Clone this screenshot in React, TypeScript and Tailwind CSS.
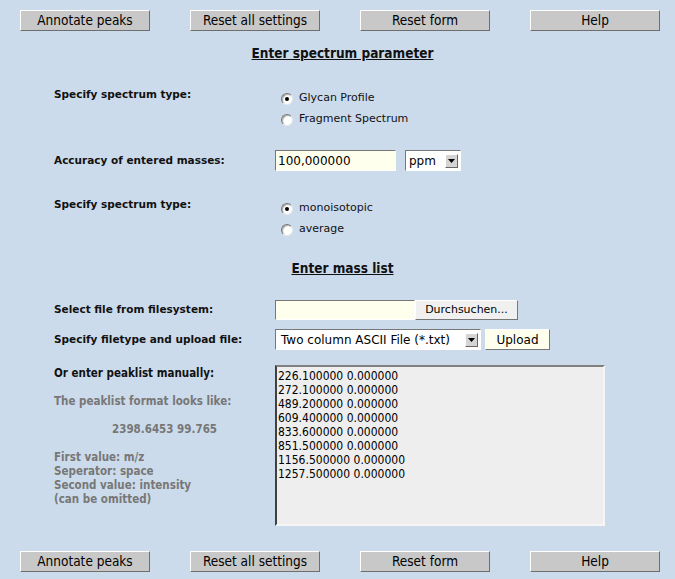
const peaks = [
  "226.100000 0.000000",
  "272.100000 0.000000",
  "489.200000 0.000000",
  "609.400000 0.000000",
  "833.600000 0.000000",
  "851.500000 0.000000",
  "1156.500000 0.000000",
  "1257.500000 0.000000",
]

const ButtonBar = () => (
  <div className="flex gap-[40px] pl-[20px] h-[21px]">
    {["Annotate peaks", "Reset all settings", "Reset form", "Help"].map((label) => (
      <div
        key={label}
        className="w-[130px] h-[21px] bg-[#c8c8c8] border border-t-white border-l-white border-b-[#6e6e6e] border-r-[#6e6e6e] flex items-center justify-center text-[13.5px] text-black font-['DejaVu_Sans_Condensed',sans-serif]"
      >
        {label}
      </div>
    ))}
  </div>
)

const Radio = ({ checked, label }: { checked?: boolean; label: string }) => (
  <div className="flex items-center h-[21px]">
    <span className="w-[12px] h-[12px] ml-[6px] rounded-full bg-white border border-t-[#777] border-l-[#777] border-b-[#e8e8e8] border-r-[#e8e8e8] shadow-[inset_1px_1px_1px_#aaa] flex items-center justify-center">
      {checked && <span className="w-[4px] h-[4px] rounded-full bg-black" />}
    </span>
    <span className="ml-[6px] text-[11px] text-[#111] font-['DejaVu_Sans',sans-serif]">{label}</span>
  </div>
)

const Arrow = () => (
  <span className="w-[13px] h-[14px] bg-[#d4d4d4] border border-t-white border-l-white border-b-[#666] border-r-[#666] flex items-center justify-center">
    <svg width="7" height="4" viewBox="0 0 7 4">
      <path d="M0 0 L7 0 L3.5 4 Z" fill="#000" />
    </svg>
  </span>
)

const Label = ({ children }: { children: React.ReactNode }) => (
  <div className="w-[221px] shrink-0 text-[10.5px] font-bold text-[#111] font-['DejaVu_Sans',sans-serif]">{children}</div>
)

const Heading = ({ children }: { children: React.ReactNode }) => (
  <div className="text-center text-[13.5px] font-bold underline text-[#111] font-['DejaVu_Sans_Condensed',sans-serif] leading-[16px]">
    {children}
  </div>
)

export default function App() {
  return (
    <div className="w-[675px] h-[579px] bg-[#ccdbeb] pt-[10px] overflow-hidden">
      <ButtonBar />

      <div className="mt-[14px] pl-[10px]">
        <Heading>Enter spectrum parameter</Heading>
      </div>

      <div className="pl-[54px]">
        <div className="flex mt-[26px]">
          <Label><div className="mt-[0px]">Specify spectrum type:</div></Label>
          <div className="flex flex-col mt-[1px]">
            <Radio checked label="Glycan Profile" />
            <Radio label="Fragment Spectrum" />
          </div>
        </div>

        <div className="flex items-center mt-[20px]">
          <Label>Accuracy of entered masses:</Label>
          <div className="w-[121px] h-[21px] bg-[#ffffee] border border-t-[#777] border-l-[#777] border-b-white border-r-white text-[12px] pl-[2px] flex items-center font-['DejaVu_Sans',sans-serif]">
            100,000000
          </div>
          <div className="ml-[9px] w-[56px] h-[21px] bg-white border border-t-[#777] border-l-[#777] border-b-white border-r-white flex items-center justify-between pl-[3px] pr-[2px] text-[12px] font-['DejaVu_Sans',sans-serif]">
            ppm
            <Arrow />
          </div>
        </div>

        <div className="flex mt-[27px]">
          <Label><div className="mt-[-1px]">Specify spectrum type:</div></Label>
          <div className="flex flex-col">
            <Radio checked label="monoisotopic" />
            <Radio label="average" />
          </div>
        </div>
      </div>

      <div className="mt-[20px] pl-[10px]">
        <Heading>Enter mass list</Heading>
      </div>

      <div className="pl-[54px]">
        <div className="flex items-center mt-[24px]">
          <Label>Select file from filesystem:</Label>
          <div className="w-[140px] h-[20px] bg-[#ffffee] border border-t-[#777] border-l-[#777] border-b-white border-r-white" />
          <div className="w-[103px] h-[20px] bg-[#f0f0f0] border border-t-white border-l-white border-b-[#777] border-r-[#777] flex items-center justify-center text-[11px] font-['DejaVu_Sans',sans-serif]">
            Durchsuchen...
          </div>
        </div>

        <div className="flex items-center mt-[9px]">
          <Label>Specify filetype and upload file:</Label>
          <div className="w-[206px] h-[21px] bg-white border border-t-[#777] border-l-[#777] border-b-white border-r-white flex items-center justify-between pl-[5px] pr-[2px] text-[12px] font-['DejaVu_Sans',sans-serif]">
            Two column ASCII File (*.txt)
            <Arrow />
          </div>
          <div className="ml-[4px] w-[65px] h-[21px] bg-[#ffffee] border border-t-white border-l-white border-b-[#777] border-r-[#777] flex items-center justify-center text-[12px] font-['DejaVu_Sans',sans-serif]">
            Upload
          </div>
        </div>

        <div className="flex mt-[15px]">
          <div className="w-[221px] shrink-0 font-['DejaVu_Sans_Condensed',sans-serif] text-[11.5px] font-bold leading-[14px]">
            <div className="text-[#111] mt-[1px]">Or enter peaklist manually:</div>
            <div className="text-[#777] mt-[14px]">The peaklist format looks like:</div>
            <div className="text-[#777] mt-[14px] pl-[58px]">2398.6453 99.765</div>
            <div className="text-[#777] mt-[14px]">
              <div>First value: m/z</div>
              <div>Seperator: space</div>
              <div>Second value: intensity</div>
              <div>(can be omitted)</div>
            </div>
          </div>
          <div className="w-[330px] h-[161px] bg-[#eeeeee] border-2 border-t-[#808080] border-l-[#404040] border-b-[#f6f6f6] border-r-[#f6f6f6] pl-[1px] pt-[2px] text-[12px] leading-[14px] text-black font-['DejaVu_Sans_Condensed',sans-serif]">
            {peaks.map((p) => (
              <div key={p}>{p}</div>
            ))}
          </div>
        </div>
      </div>

      <div className="mt-[25px]">
        <ButtonBar />
      </div>
    </div>
  )
}
